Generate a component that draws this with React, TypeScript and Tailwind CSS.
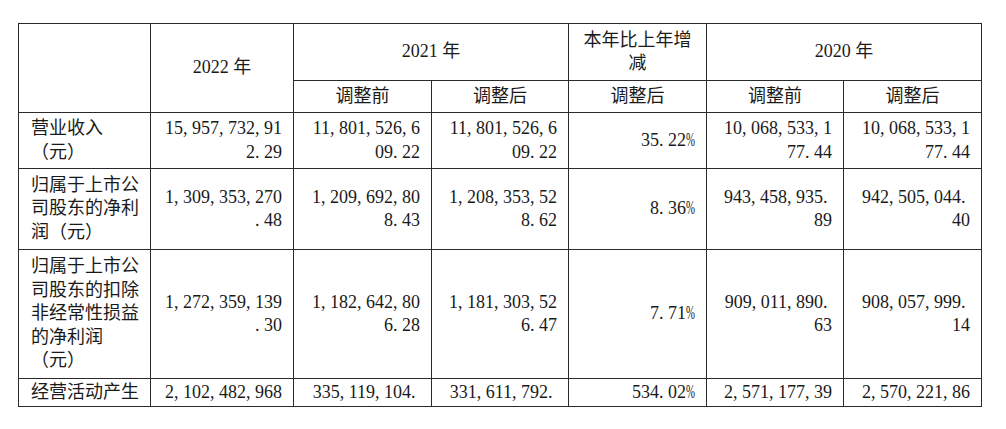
import React from 'react';

type Row = { label: string[]; cells: (string[] | string)[]; h: string };

const rows: Row[] = [
  {
    label: ['营业收入', '（元）'],
    h: 'h-[56px]',
    cells: [
      ['15,957,732,91', '2.29'],
      ['11,801,526,6', '09.22'],
      ['11,801,526,6', '09.22'],
      '35.22%',
      ['10,068,533,1', '77.44'],
      ['10,068,533,1', '77.44'],
    ],
  },
  {
    label: ['归属于上市公', '司股东的净利', '润（元）'],
    h: 'h-[81px]',
    cells: [
      ['1,309,353,270', '.48'],
      ['1,209,692,80', '8.43'],
      ['1,208,353,52', '8.62'],
      '8.36%',
      ['943,458,935.', '89'],
      ['942,505,044.', '40'],
    ],
  },
  {
    label: ['归属于上市公', '司股东的扣除', '非经常性损益', '的净利润', '（元）'],
    h: 'h-[129px]',
    cells: [
      ['1,272,359,139', '.30'],
      ['1,182,642,80', '6.28'],
      ['1,181,303,52', '6.47'],
      '7.71%',
      ['909,011,890.', '63'],
      ['908,057,999.', '14'],
    ],
  },
  {
    label: ['经营活动产生'],
    h: 'h-[28px]',
    cells: [
      ['2,102,482,968'],
      ['335,119,104.'],
      ['331,611,792.'],
      '534.02%',
      ['2,571,177,39'],
      ['2,570,221,86'],
    ],
  },
];

// SimSun-style half-width punctuation
const Num = ({ text }: { text: string }) => (
  <span>
    {text.split('').map((ch, i) => {
      if (ch === ',' || ch === '.') {
        return (
          <span key={i} className="inline-block w-[0.5em] text-left">
            {ch}
          </span>
        );
      }
      if (ch === '%') {
        return (
          <span key={i} className="inline-block w-[0.5em] text-left">
            <span className="inline-block scale-x-60 origin-left">%</span>
          </span>
        );
      }
      return <span key={i}>{ch}</span>;
    })}
  </span>
);

const cellBorder = 'border border-[#2a2a2a]';

export default function App() {
  return (
    <div className="min-h-screen bg-white pt-[23px] pl-[18px]">
      <table
        className="table-fixed border-collapse w-[963px] text-[18px] leading-[23.5px] text-[#1a1a1a]"
        style={{ fontFamily: '"Liberation Serif", "Noto Sans CJK SC", serif' }}
      >
        <colgroup>
          <col className="w-[132px]" />
          <col className="w-[143px]" />
          <col className="w-[138px]" />
          <col className="w-[137px]" />
          <col className="w-[138px]" />
          <col className="w-[137px]" />
          <col className="w-[138px]" />
        </colgroup>
        <thead>
          <tr className="h-[57px]">
            <th rowSpan={2} className={`${cellBorder} font-normal`}></th>
            <th rowSpan={2} className={`${cellBorder} font-normal text-center align-middle`}>
              2022 年
            </th>
            <th colSpan={2} className={`${cellBorder} font-normal text-center align-middle`}>
              2021 年
            </th>
            <th className={`${cellBorder} font-normal text-center align-middle px-[11px]`}>
              本年比上年增
              <br />减
            </th>
            <th colSpan={2} className={`${cellBorder} font-normal text-center align-middle`}>
              2020 年
            </th>
          </tr>
          <tr className="h-[32px]">
            {['调整前', '调整后', '调整后', '调整前', '调整后'].map((t, i) => (
              <th key={i} className={`${cellBorder} font-normal text-center align-middle p-0`}>
                {t}
              </th>
            ))}
          </tr>
        </thead>
        <tbody>
          {rows.map((r, ri) => (
            <tr key={ri} className={r.h}>
              <td className={`${cellBorder} align-middle text-left pl-[12px] pr-[8px] py-0`}>
                {r.label.map((l, li) => (
                  <div key={li} className="whitespace-nowrap">
                    {l}
                  </div>
                ))}
              </td>
              {r.cells.map((c, ci) => (
                <td key={ci} className={`${cellBorder} align-middle text-right pr-[11px] pl-2 py-0`}>
                  {typeof c === 'string' ? (
                    <Num text={c} />
                  ) : (
                    c.map((line, li) => (
                      <div key={li} className="whitespace-nowrap">
                        <Num text={line} />
                      </div>
                    ))
                  )}
                </td>
              ))}
            </tr>
          ))}
        </tbody>
      </table>
    </div>
  );
}
